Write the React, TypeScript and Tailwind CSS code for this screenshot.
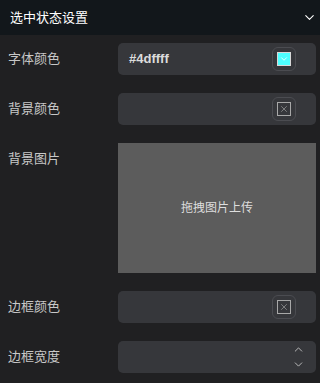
import { ChevronDown, ChevronUp, X } from 'lucide-react'

/**
 * 选中状态设置面板：字体颜色 / 背景颜色 / 背景图片 / 边框颜色 / 边框宽度
 */
const font = { fontFamily: '"Liberation Sans", "Noto Sans CJK SC", sans-serif' }

function Row({ label, children }: { label: string; children: React.ReactNode }) {
  return (
    <div className="flex items-start">
      <div className="w-[110px] h-8 flex items-center text-[13px] text-[#c8c8c8]">{label}</div>
      <div className="flex-1">{children}</div>
    </div>
  )
}

function Field({ children }: { children?: React.ReactNode }) {
  return (
    <div className="h-8 rounded-[5px] bg-[#36373b] flex items-center justify-between pl-[11px] pr-[20px]">
      {children}
    </div>
  )
}

function ClearButton() {
  return (
    <div className="ml-auto w-[24px] h-[24px] rounded-md border border-[#4b4c51] flex items-center justify-center">
      <div className="w-[14px] h-[14px] border border-[#a8a8a8] flex items-center justify-center">
        <X size={10} strokeWidth={1.5} className="text-[#a8a8a8]" />
      </div>
    </div>
  )
}

export default function App() {
  return (
    <div className="w-[320px] h-[383px] bg-[#202022] overflow-hidden" style={font}>
      {/* 标题栏 */}
      <div className="h-[35px] bg-[#12171b] flex items-center justify-between pl-[10px] pr-[3px]">
        <span className="text-[13px] text-white">选中状态设置</span>
        <ChevronDown size={15} strokeWidth={1.75} className="text-white" />
      </div>

      <div className="flex flex-col gap-[18px] pt-[8px] pl-[8px] pr-[4px]">
        <Row label="字体颜色">
          <Field>
            <span className="text-[13px] font-bold text-[#dcdcdc]">#4dffff</span>
            <div className="w-[24px] h-[24px] rounded-md border border-[#4b4c51] flex items-center justify-center">
              <div className="w-[14px] h-[14px] bg-[#4dffff] border border-[#d8d8d8] flex items-center justify-center">
                <ChevronDown size={10} strokeWidth={2} className="text-white" />
              </div>
            </div>
          </Field>
        </Row>

        <Row label="背景颜色">
          <Field>
            <ClearButton />
          </Field>
        </Row>

        <Row label="背景图片">
          <div className="h-[130px] bg-[#5c5c5c] flex items-center justify-center text-[12px] text-[#dedede]">
            拖拽图片上传
          </div>
        </Row>

        <Row label="边框颜色">
          <Field>
            <ClearButton />
          </Field>
        </Row>

        <Row label="边框宽度">
          <div className="h-8 rounded-[5px] bg-[#36373b] flex items-center justify-end pr-[11px]">
            <div className="flex flex-col items-center gap-[2px] text-[#d4d4d4]">
              <ChevronUp size={13} strokeWidth={1.5} />
              <ChevronDown size={13} strokeWidth={1.5} />
            </div>
          </div>
        </Row>
      </div>
    </div>
  )
}
